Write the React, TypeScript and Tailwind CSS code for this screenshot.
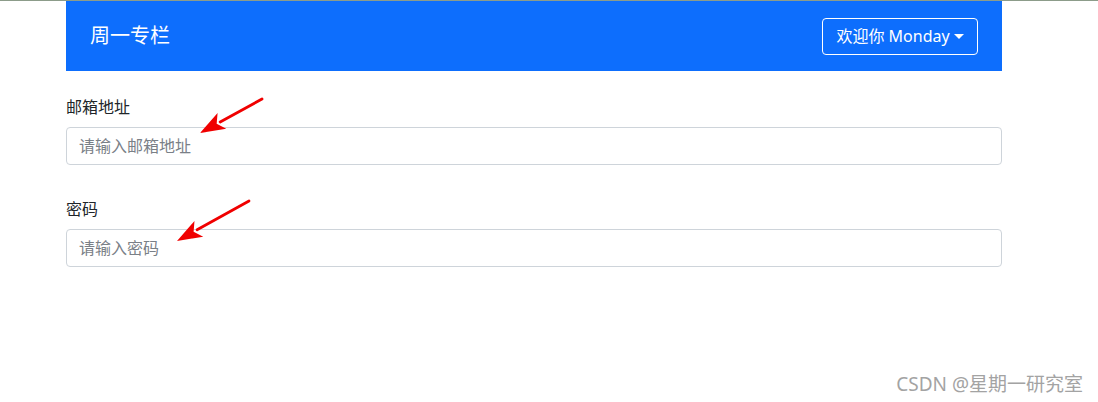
type FieldProps = {
  label: string
  placeholder: string
  type?: string
  className?: string
}

function Field({ label, placeholder, type = 'text', className }: FieldProps) {
  return (
    <div className={className}>
      <label className="mb-[8px] block text-[16px] leading-[24px] text-[#212529]">{label}</label>
      <input
        type={type}
        placeholder={placeholder}
        className="block h-[38px] w-full rounded-[4px] border border-[#ced4da] bg-white px-[12px] text-[16px] text-[#212529] outline-none placeholder:text-[#7a8087]"
      />
    </div>
  )
}

function Arrow({ x1, y1, x2, y2 }: { x1: number; y1: number; x2: number; y2: number }) {
  // head drawn as a notched triangle pointing at (x2, y2)
  const dx = x2 - x1
  const dy = y2 - y1
  const len = Math.hypot(dx, dy)
  const ux = dx / len
  const uy = dy / len
  const headLen = 25
  const headW = 9
  const bx = x2 - ux * headLen
  const by = y2 - uy * headLen
  const p1 = `${bx - uy * headW},${by + ux * headW}`
  const p2 = `${bx + uy * headW},${by - ux * headW}`
  const nx = x2 - ux * (headLen - 6)
  const ny = y2 - uy * (headLen - 6)
  return (
    <g>
      <line x1={x1} y1={y1} x2={bx + ux * 2} y2={by + uy * 2} stroke="#f00000" strokeWidth={2.8} strokeLinecap="round" />
      <polygon points={`${x2},${y2} ${p1} ${nx},${ny} ${p2}`} fill="#f00000" />
    </g>
  )
}

export default function App() {
  return (
    <div
      className="relative h-[402px] w-[1098px] overflow-hidden border-t border-[#8c9c8a] bg-white"
      style={{ fontFamily: '"Noto Sans", "Noto Sans CJK SC", sans-serif' }}
    >
      <div className="ml-[66px] w-[936px]">
        <nav className="flex h-[70px] items-center justify-between bg-[#0d6efd] px-[24px]">
          <span className="text-[20px] text-white">周一专栏</span>
          <button className="flex h-[37px] w-[156px] items-center justify-center gap-[4px] rounded-[4px] border border-white text-[16px] text-white">
            <span>欢迎你 Monday</span>
            <svg width="10" height="6" viewBox="0 0 10 6" className="mt-[1px]">
              <polygon points="0,0 10,0 5,5" fill="white" />
            </svg>
          </button>
        </nav>

        <Field label="邮箱地址" placeholder="请输入邮箱地址" className="mt-[24px]" />
        <Field label="密码" placeholder="请输入密码" type="password" className="mt-[32px]" />
      </div>

      <svg className="pointer-events-none absolute left-0 top-0" width="1098" height="402">
        <Arrow x1={262} y1={98} x2={200} y2={132} />
        <Arrow x1={249} y1={200} x2={177} y2={240} />
      </svg>

      <span className="absolute right-[15px] top-[371px] text-[19px] leading-[24px] text-[#a3a3a3]">
        CSDN @星期一研究室
      </span>
    </div>
  )
}
